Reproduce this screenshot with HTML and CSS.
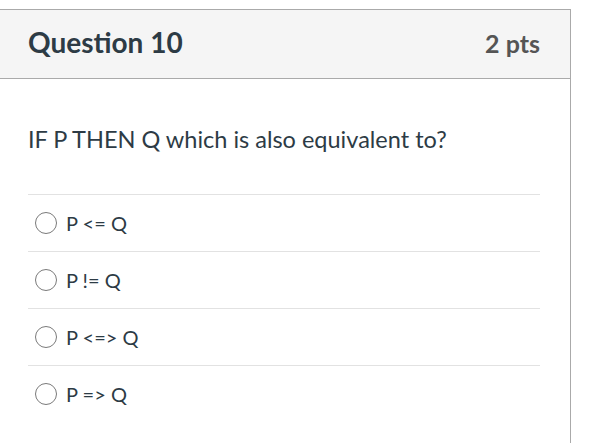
FILE: index.html
```html
<!DOCTYPE html>
<html lang="en">
<head>
    <meta charset="UTF-8">
    <title>Question 10</title>
    <link rel="stylesheet" href="styles.css">
</head>
<body>
    <div class="question">
        <div class="question-header">
            <h2 class="question-title">Question 10</h2>
            <span class="question-points">2 pts</span>
        </div>
        <div class="question-body">
            <p class="question-text">IF P THEN Q which is also equivalent to?</p>
            <div class="answers">
                <label class="answer"><input type="radio" name="q10"><span class="radio"></span>P &lt;= Q</label>
                <label class="answer"><input type="radio" name="q10"><span class="radio"></span>P != Q</label>
                <label class="answer"><input type="radio" name="q10"><span class="radio"></span>P &lt;=&gt; Q</label>
                <label class="answer"><input type="radio" name="q10"><span class="radio"></span>P =&gt; Q</label>
            </div>
        </div>
    </div>
</body>
</html>
```

FILE: styles.css
```css
body {
    margin: 0;
    padding: 0;
    background-color: #ffffff;
    font-family: Lato, "Noto Sans", sans-serif;
    color: #2d3b45;
}

.question {
    margin: 9px 0 0 -1px;
    width: 572px;
    border: 1px solid #aaaaaa;
    border-bottom: none;
    box-sizing: border-box;
}

.question-header {
    display: flex;
    justify-content: space-between;
    align-items: baseline;
    height: 52px;
    padding: 16px 30px 0 28px;
    background-color: #f5f5f5;
    border-bottom: 1px solid #aaaaaa;
}

.question-title {
    margin: 0;
    font-size: 28px;
    font-weight: 700;
    line-height: 1.2;
    color: #2d3b45;
}

.question-points {
    font-size: 25px;
    font-weight: 700;
    color: #555555;
}

.question-body {
    padding: 46px 30px 40px 28px;
}

.question-text {
    margin: 0 0 41px;
    font-size: 23.5px;
    line-height: 1.2;
}

.answers {
    border-top: 1px solid #e2e2e2;
}

.answer {
    display: flex;
    align-items: center;
    height: 56px;
    padding-left: 7px;
    font-size: 20px;
    border-bottom: 1px solid #e2e2e2;
}

.answer:last-child {
    border-bottom: none;
}

.answer input {
    display: none;
}

.radio {
    width: 22px;
    height: 22px;
    margin-right: 9px;
    border: 1.5px solid #7a7a7a;
    border-radius: 50%;
    box-sizing: border-box;
}
```
